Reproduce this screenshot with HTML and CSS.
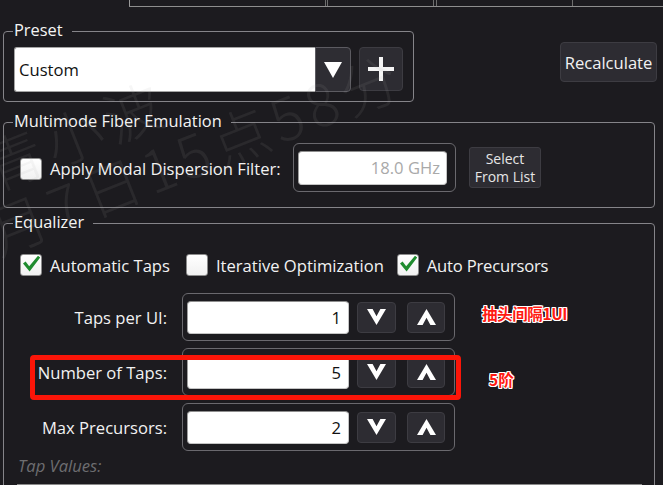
FILE: index.html
```html
<!DOCTYPE html>
<html lang="en">
<head>
<meta charset="utf-8">
<title>Equalizer</title>
<link rel="stylesheet" href="styles.css">
</head>
<body>
<div class="page">
  <div class="tabs">
    <span class="tab tab-a"></span>
    <span class="tab tab-b"></span>
    <span class="tab tab-c"></span>
  </div>

  <div class="top-row">
    <fieldset class="group preset">
      <legend>Preset</legend>
      <div class="preset-row">
        <div class="combo">
          <span class="combo-field">Custom</span>
          <span class="combo-btn">
            <svg width="18" height="16" viewBox="0 0 18 16"><path d="M0 0H18L9 16Z" fill="#fff"/></svg>
          </span>
        </div>
        <button class="btn plus-btn">
          <svg width="26" height="24" viewBox="0 0 26 24"><path d="M11 0H15V10H26V14H15V24H11V14H0V10H11Z" fill="#f4f4f4"/></svg>
        </button>
      </div>
    </fieldset>
    <button class="btn recalc">Recalculate</button>
  </div>

  <fieldset class="group mmf">
    <legend>Multimode Fiber Emulation</legend>
    <div class="mmf-row">
      <label class="check mmf-check"><span class="box"></span><span>Apply Modal Dispersion Filter:</span></label>
      <div class="frame mmf-frame"><div class="field disabled">18.0 GHz</div></div>
      <button class="btn select-btn"><span class="sel-line">Select</span><span class="sel-line">From List</span></button>
    </div>
  </fieldset>

  <fieldset class="group eq">
    <legend>Equalizer</legend>
    <div class="checks">
      <label class="check"><span class="box"><svg width="22" height="22" viewBox="0 0 22 22"><path d="M3 9.5L5.6 7.6L9.2 12.3L18 1.8L20.2 3.4L9.6 17.6Z" fill="#1f8c2f"/></svg></span><span>Automatic Taps</span></label>
      <label class="check"><span class="box"></span><span>Iterative Optimization</span></label>
      <label class="check"><span class="box"><svg width="22" height="22" viewBox="0 0 22 22"><path d="M3 9.5L5.6 7.6L9.2 12.3L18 1.8L20.2 3.4L9.6 17.6Z" fill="#1f8c2f"/></svg></span><span class="auto-pre">Auto Precursors</span></label>
    </div>

    <div class="params">
      <span class="plabel">Taps per UI:</span>
      <div class="frame spin">
        <div class="field">1</div>
        <button class="btn step down"><svg width="19" height="16" viewBox="0 0 19 16"><path d="M0 0H5.6L9.5 7.2L13.4 0H19L9.5 16Z" fill="#fff"/></svg></button>
        <button class="btn step up"><svg width="19" height="16" viewBox="0 0 19 16"><path d="M0 16H5.6L9.5 8.8L13.4 16H19L9.5 0Z" fill="#fff"/></svg></button>
      </div>

      <span class="plabel">Number of Taps:</span>
      <div class="frame spin">
        <div class="field">5</div>
        <button class="btn step down"><svg width="19" height="16" viewBox="0 0 19 16"><path d="M0 0H5.6L9.5 7.2L13.4 0H19L9.5 16Z" fill="#fff"/></svg></button>
        <button class="btn step up"><svg width="19" height="16" viewBox="0 0 19 16"><path d="M0 16H5.6L9.5 8.8L13.4 16H19L9.5 0Z" fill="#fff"/></svg></button>
      </div>

      <span class="plabel">Max Precursors:</span>
      <div class="frame spin">
        <div class="field">2</div>
        <button class="btn step down"><svg width="19" height="16" viewBox="0 0 19 16"><path d="M0 0H5.6L9.5 7.2L13.4 0H19L9.5 16Z" fill="#fff"/></svg></button>
        <button class="btn step up"><svg width="19" height="16" viewBox="0 0 19 16"><path d="M0 16H5.6L9.5 8.8L13.4 16H19L9.5 0Z" fill="#fff"/></svg></button>
      </div>
    </div>

    <div class="tap-values">Tap Values:</div>
    <div class="tap-table"></div>
  </fieldset>

  <div class="highlight"></div>
  <div class="note note-1">抽头间隔1UI</div>
  <div class="note note-2">5阶</div>

  <div class="watermark wm-1">青小波</div>
  <div class="watermark wm-2">月7日15点58分</div>
</div>
</body>
</html>
```

FILE: styles.css
```css
* { box-sizing: border-box; }

html, body {
  margin: 0;
  height: 100%;
  overflow: hidden;
}

body {
  background: #1c1b1f;
  font-family: "Open Sans", "Noto Sans CJK SC", sans-serif;
  font-size: 16.6px;
  color: #f2f2f2;
}

.page {
  position: relative;
  width: 663px;
  height: 485px;
  overflow: hidden;
}

/* top tab strip remnant */
.tabs {
  display: flex;
  margin-left: 129px;
  height: 7px;
  border-bottom: 1px solid #8e8e8e;
}
.tab { height: 100%; }
.tab-a { width: 197px; border-left: 1px solid #9a9a9a; border-right: 1px solid #6e6e6e; }
.tab-b { width: 107px; margin-left: 1px; border-left: 1px solid #6e6e6e; border-right: 1px solid #6e6e6e; }
.tab-c { width: 137px; margin-left: 2px; border-left: 1px solid #6e6e6e; border-right: 1px solid #6e6e6e; }

/* group boxes */
.group {
  margin: 0;
  min-width: 0;
  border: 1px solid #858489;
  border-radius: 4px;
  padding: 0;
}
.group legend {
  margin-left: -1px;
  padding: 0 9px 3px 1px;
  line-height: 20px;
  font-size: 16.4px;
  color: #f4f4f4;
}

.top-row {
  display: flex;
  justify-content: space-between;
  align-items: flex-start;
  padding: 13px 6px 0 3px;
}

.preset { padding: 4px 10px 9px 10px; }

.preset-row {
  display: flex;
  gap: 8px;
}

.combo {
  display: flex;
  width: 337px;
  height: 45px;
}
.combo-field {
  flex: 1;
  display: flex;
  align-items: center;
  padding-left: 4px;
  background: #fff;
  color: #111;
  border: 1px solid #a4a4a4;
  border-right: none;
  border-radius: 3px 0 0 3px;
}
.combo-btn {
  width: 36px;
  display: flex;
  align-items: center;
  justify-content: center;
  background: #2e2d33;
  border: 1px solid #5c5b61;
  border-radius: 0 4px 4px 0;
}

.btn {
  display: flex;
  align-items: center;
  justify-content: center;
  padding: 0;
  margin: 0;
  background: #2d2c32;
  border: 1px solid #3d3c42;
  border-radius: 4px;
  color: #f2f2f2;
  font-family: inherit;
  font-size: 16.6px;
}

.plus-btn { width: 44px; height: 44px; }

.recalc {
  margin-top: 22px;
  width: 97px;
  height: 40px;
  font-size: 16.6px;
}

/* multimode */
.mmf {
  margin: 9px 8px 0 3px;
  padding: 9px 16px 15px 16px;
}
.mmf legend, .eq legend { margin-left: -7px; }

.mmf-row {
  display: flex;
  align-items: center;
}

.check {
  display: flex;
  align-items: center;
  gap: 8px;
  white-space: nowrap;
}
.box {
  width: 22px;
  height: 22px;
  flex: none;
  background: linear-gradient(#ffffff, #f1f1f1);
  border: 1px solid #8c8c8c;
  border-radius: 3px;
  display: flex;
}
.box svg { margin: -1px; }

.mmf-check { width: 273px; flex: none; margin-top: 2px; }

.frame {
  display: flex;
  align-items: center;
  border: 1px solid #6a696e;
  border-radius: 6px;
}
.mmf-frame {
  width: 163px;
  height: 49px;
  padding: 0 8px 0 4px;
}

.field {
  flex: 1;
  height: 34px;
  display: flex;
  align-items: center;
  justify-content: flex-end;
  padding-right: 6px;
  background: #fff;
  color: #111;
  border: 1px solid #c4c4c4;
  border-top-color: #8e8e8e;
  border-left-color: #9e9e9e;
  border-radius: 4px;
}
.field.disabled { color: #a9a9a9; }

.select-btn {
  margin-left: 13px;
  width: 72px;
  height: 41px;
  flex-direction: column;
  font-size: 14px;
  color: #e6e6e6;
  text-align: center;
  border-radius: 3px;
}
.sel-line { display: block; height: 19px; line-height: 19px; margin: -0.5px 0; }

/* equalizer */
.eq {
  margin: 4px 8px 0 3px;
  padding: 19px 13px 40px 16px;
}

.checks {
  display: flex;
  gap: 16px;
  height: 22px;
}
.checks .check:last-child { margin-left: -3px; }
.auto-pre { letter-spacing: -0.2px; }

.params {
  margin-top: 17px;
  display: grid;
  grid-template-columns: 147px 273px;
  column-gap: 15px;
  row-gap: 7px;
  align-items: center;
}
.plabel { text-align: right; }

.spin {
  height: 48px;
  padding: 0 9px 0 4px;
}
.spin .field { flex: none; width: 162px; height: 33px; padding-right: 7px; }
.step { width: 39px; height: 31px; margin-left: 8px; border-radius: 4px; }
.step.up { width: 38px; margin-left: 11px; }

.tap-values {
  margin-top: 5px;
  margin-left: -2px;
  line-height: 20px;
  font-style: italic;
  color: #6d6d70;
}
.tap-table {
  margin-top: 8px;
  margin-left: -3px;
  width: 625px;
  height: 20px;
  border-top: 1px solid #8a8a8a;
}

/* annotations */
.highlight {
  position: absolute;
  left: 30px;
  top: 355px;
  width: 431px;
  height: 45px;
  border: 5px solid #fb1508;
  border-radius: 4px;
}
.note {
  position: absolute;
  font-family: "Noto Sans CJK SC", sans-serif;
  font-weight: 700;
  font-size: 15.5px;
  line-height: 16px;
  color: #ff1b12;
  text-shadow: 1px 0 0 #fff, -1px 0 0 #fff, 0 1px 0 #fff, 0 -1px 0 #fff, 1px 1px 0 #fff, -1px -1px 0 #fff, 1px -1px 0 #fff, -1px 1px 0 #fff;
}
.note-1 { left: 482px; top: 305px; letter-spacing: -0.4px; }
.note-2 { left: 489px; top: 371px; }

/* watermark */
.watermark {
  position: absolute;
  font-family: "Noto Sans CJK SC", sans-serif;
  font-weight: 300;
  font-size: 58px;
  line-height: 60px;
  letter-spacing: 6px;
  white-space: nowrap;
  color: rgba(170, 170, 170, 0.1);
  transform-origin: 0 50%;
  transform: rotate(-21.7deg);
  pointer-events: none;
}
.wm-1 { left: -14px; top: 138px; }
.wm-2 { left: -10px; top: 203px; }
```
